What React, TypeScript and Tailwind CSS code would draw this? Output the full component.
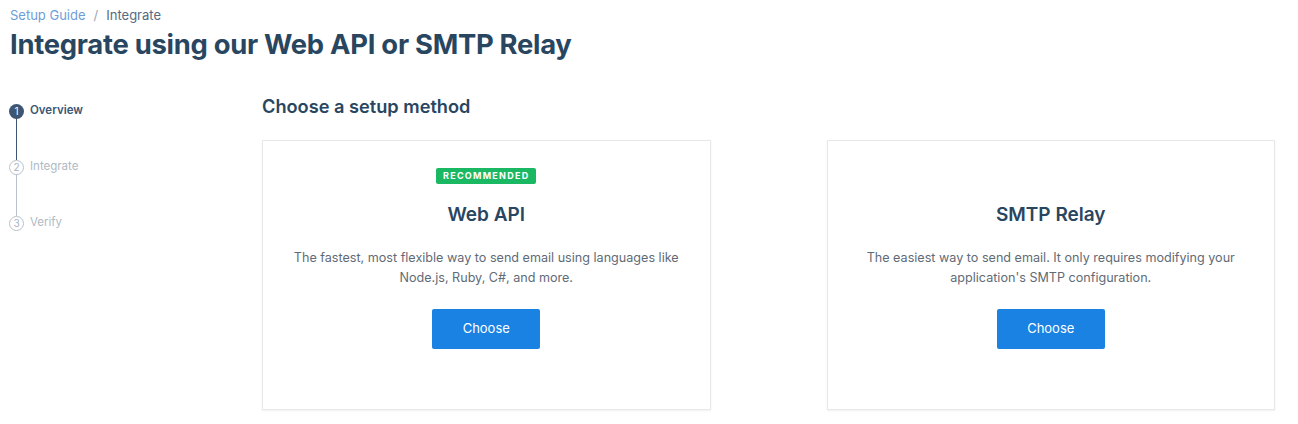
const steps = [
  { n: 1, label: 'Overview', active: true },
  { n: 2, label: 'Integrate', active: false },
  { n: 3, label: 'Verify', active: false },
];

const methods = [
  {
    title: 'Web API',
    recommended: true,
    text: ['The fastest, most flexible way to send email using languages like', 'Node.js, Ruby, C#, and more.'],
  },
  {
    title: 'SMTP Relay',
    recommended: false,
    text: ['The easiest way to send email. It only requires modifying your', "application's SMTP configuration."],
  },
];

function Stepper() {
  return (
    <div className="w-[253px] shrink-0 pt-[42px] -ml-px">
      {steps.map((s, i) => (
        <div key={s.n}>
          <div className="flex items-center h-[14px]">
            <span
              className={
                s.active
                  ? 'w-[15px] h-[15px] shrink-0 rounded-full bg-[#3d5673] text-white text-[10px] flex items-center justify-center'
                  : 'w-[15px] h-[15px] shrink-0 rounded-full border border-[#b9c2cc] text-[#a9b4bf] text-[10px] flex items-center justify-center'
              }
            >
              {s.n}
            </span>
            <span
              className={
                s.active
                  ? 'ml-[6px] text-[11.5px] font-semibold text-[#3d5673]'
                  : 'ml-[6px] text-[11.5px] text-[#b0bac4]'
              }
            >
              {s.label}
            </span>
          </div>
          {i < steps.length - 1 && (
            <div className={'ml-[7px] w-px h-[42px] ' + (s.active ? 'bg-[#3d5673]' : 'bg-[#b9c2cc]')} />
          )}
        </div>
      ))}
    </div>
  );
}

function MethodCard({ title, recommended, text }: { title: string; recommended: boolean; text: string[] }) {
  return (
    <div className="h-[270px] border border-[#e6e9ec] bg-white shadow-[0_1px_2px_rgba(0,0,0,0.06)] flex flex-col items-center pt-[27px]">
      <span
        className={
          'h-[16px] px-[7px] rounded-[2px] bg-[#1bb863] text-white text-[9px] font-bold tracking-[0.14em] flex items-center ' +
          (recommended ? '' : 'invisible')
        }
      >
        RECOMMENDED
      </span>
      <h3 className="mt-[19px] text-[19px] leading-[24px] font-semibold text-[#294661]">{title}</h3>
      <p className="mt-[21px] text-[12.6px] leading-[20px] text-[#5f6b77] text-center">
        {text[0]}
        <br />
        {text[1]}
      </p>
      <button className="mt-[21px] w-[108px] h-[40px] rounded-[2px] bg-[#1a82e2] text-white text-[13px]">
        Choose
      </button>
    </div>
  );
}

export default function App() {
  return (
    <div className="min-h-[424px] bg-white font-['Inter',sans-serif] pl-[10px] pr-[23px]">
      <div className="pt-[6px] text-[13px] leading-[18px]">
        <span className="text-[#6b9ed8]">Setup Guide</span>
        <span className="text-[#9aa7b4] mx-[8px]">/</span>
        <span className="text-[#546b81]">Integrate</span>
      </div>
      <h1 className="mt-[2px] text-[27.4px] leading-[36px] font-bold text-[#294661] tracking-[-0.01em]">
        Integrate using our Web API or SMTP Relay
      </h1>
      <div className="flex">
        <Stepper />
        <div className="flex-1">
          <h2 className="mt-[32px] text-[18.2px] leading-[24px] font-semibold text-[#294661]">Choose a setup method</h2>
          <div className="mt-[22px] grid grid-cols-2 gap-[116px]">
            {methods.map((m) => (
              <MethodCard key={m.title} {...m} />
            ))}
          </div>
        </div>
      </div>
    </div>
  );
}
